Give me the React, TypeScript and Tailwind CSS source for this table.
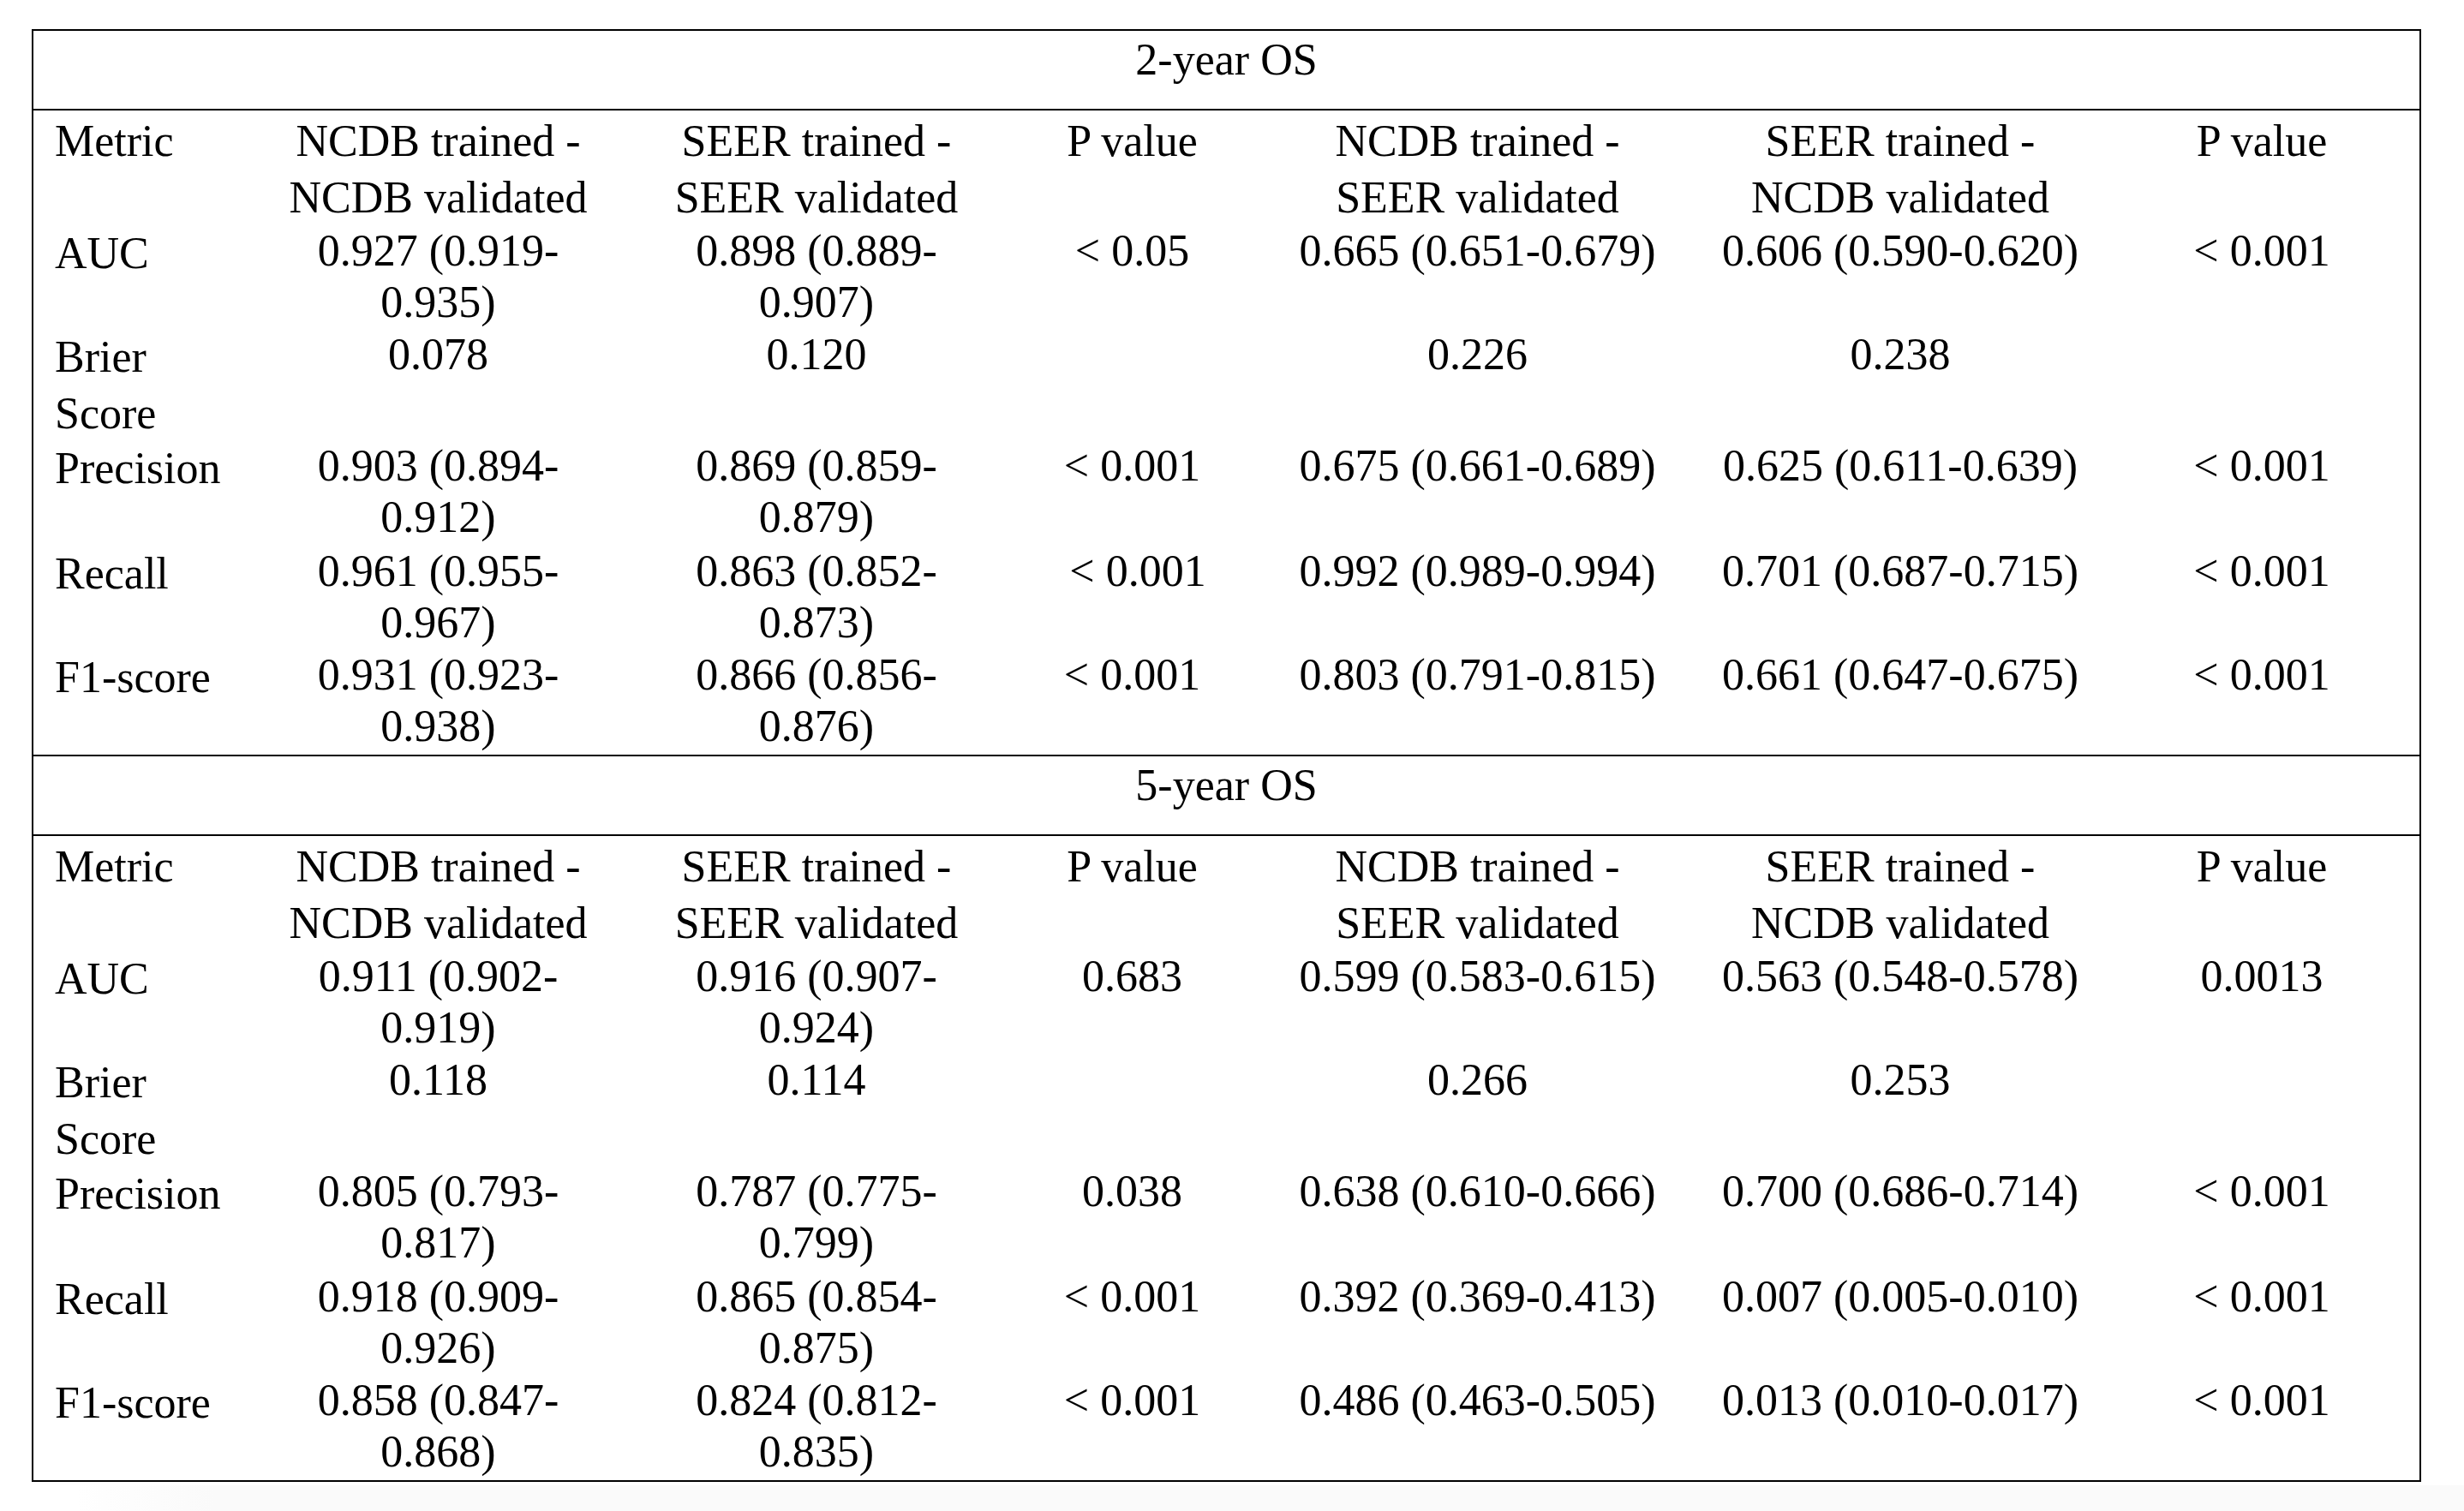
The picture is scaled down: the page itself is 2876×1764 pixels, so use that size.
type Cell = { lines: string[]; num?: boolean };
type Row = { h: string; cells: Cell[] };

const colWidths = ['w-[252px]', 'w-[441px]', 'w-[442px]', 'w-[295px]', 'w-[511px]', 'w-[476px]', 'w-[368px]'];

const t = (...lines: string[]): Cell => ({ lines });
const n = (...lines: string[]): Cell => ({ lines, num: true });

const headerRow: Row = {
  h: 'h-[131px]',
  cells: [
    t('Metric'),
    t('NCDB trained -', 'NCDB validated'),
    t('SEER trained -', 'SEER validated'),
    t('P value'),
    t('NCDB trained -', 'SEER validated'),
    t('SEER trained -', 'NCDB validated'),
    t('P value'),
  ],
};

const sections: { title: string; rows: Row[] }[] = [
  {
    title: '2-year OS',
    rows: [
      headerRow,
      {
        h: 'h-[121px]',
        cells: [t('AUC'), n('0.927 (0.919-', '0.935)'), n('0.898 (0.889-', '0.907)'), n('< 0.05'), n('0.665 (0.651-0.679)'), n('0.606 (0.590-0.620)'), n('< 0.001')],
      },
      {
        h: 'h-[130px]',
        cells: [t('Brier', 'Score'), n('0.078'), n('0.120'), n(), n('0.226'), n('0.238'), n()],
      },
      {
        h: 'h-[123px]',
        cells: [t('Precision'), n('0.903 (0.894-', '0.912)'), n('0.869 (0.859-', '0.879)'), n('< 0.001'), n('0.675 (0.661-0.689)'), n('0.625 (0.611-0.639)'), n('< 0.001')],
      },
      {
        h: 'h-[121px]',
        cells: [t('Recall'), n('0.961 (0.955-', '0.967)'), n('0.863 (0.852-', '0.873)'), n('\u00a0< 0.001'), n('0.992 (0.989-0.994)'), n('0.701 (0.687-0.715)'), n('< 0.001')],
      },
      {
        h: 'h-[126px]',
        cells: [t('F1-score'), n('0.931 (0.923-', '0.938)'), n('0.866 (0.856-', '0.876)'), n('< 0.001'), n('0.803 (0.791-0.815)'), n('0.661 (0.647-0.675)'), n('< 0.001')],
      },
    ],
  },
  {
    title: '5-year OS',
    rows: [
      headerRow,
      {
        h: 'h-[121px]',
        cells: [t('AUC'), n('0.911 (0.902-', '0.919)'), n('0.916 (0.907-', '0.924)'), n('0.683'), n('0.599 (0.583-0.615)'), n('0.563 (0.548-0.578)'), n('0.0013')],
      },
      {
        h: 'h-[130px]',
        cells: [t('Brier', 'Score'), n('0.118'), n('0.114'), n(), n('0.266'), n('0.253'), n()],
      },
      {
        h: 'h-[123px]',
        cells: [t('Precision'), n('0.805 (0.793-', '0.817)'), n('0.787 (0.775-', '0.799)'), n('0.038'), n('0.638 (0.610-0.666)'), n('0.700 (0.686-0.714)'), n('< 0.001')],
      },
      {
        h: 'h-[121px]',
        cells: [t('Recall'), n('0.918 (0.909-', '0.926)'), n('0.865 (0.854-', '0.875)'), n('< 0.001'), n('0.392 (0.369-0.413)'), n('0.007 (0.005-0.010)'), n('< 0.001')],
      },
      {
        h: 'h-[126px]',
        cells: [t('F1-score'), n('0.858 (0.847-', '0.868)'), n('0.824 (0.812-', '0.835)'), n('< 0.001'), n('0.486 (0.463-0.505)'), n('0.013 (0.010-0.017)'), n('< 0.001')],
      },
    ],
  },
];

const TableRow = ({ row }: { row: Row }) => (
  <div className={`flex ${row.h}`}>
    {row.cells.map((cell, i) => (
      <div
        key={i}
        className={`${colWidths[i]} shrink-0 pt-[3px] ${i === 0 ? 'pl-[25px] text-left' : 'text-center'} ${cell.num ? 'leading-[60px]' : 'leading-[66px]'}`}
      >
        {cell.lines.map((line, j) => (
          <div key={j} className="whitespace-nowrap">
            {line}
          </div>
        ))}
      </div>
    ))}
  </div>
);

export default function App() {
  return (
    <div className="w-[2876px] h-[1764px] bg-white overflow-hidden font-['Liberation_Serif','Times_New_Roman',serif] text-[52px] text-black">
      <div className="pt-[34px] pl-[37px]">
        <div className="w-[2789px] border-2 border-black">
          {sections.map((section, s) => (
            <section key={section.title} className={s > 0 ? 'border-t-2 border-black' : ''}>
              <div className="h-[93px] border-b-2 border-black pt-px text-center leading-[66px]">{section.title}</div>
              {section.rows.map((row, r) => (
                <TableRow key={r} row={row} />
              ))}
            </section>
          ))}
        </div>
      </div>
      <div className="mt-[4px] ml-[90px] h-[40px] bg-[linear-gradient(to_right,#ffffff,#fafafa_160px)]" />
    </div>
  );
}
